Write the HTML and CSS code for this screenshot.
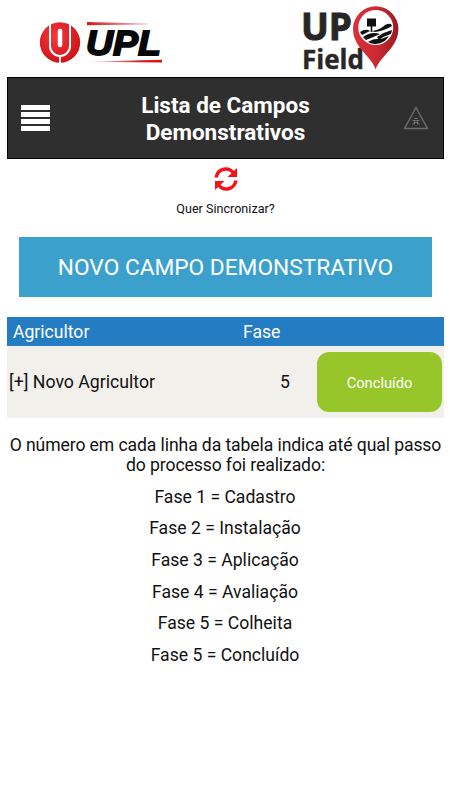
FILE: index.html
```html
<!DOCTYPE html>
<html lang="pt-BR">
<head>
<meta charset="utf-8">
<title>Lista de Campos Demonstrativos</title>
<link rel="stylesheet" href="styles.css">
</head>
<body>
<div class="brands">
  <svg class="logo-upl" width="130" height="77" viewBox="38 0 130 77" role="img" aria-label="UPL">
    <defs>
      <radialGradient id="disc" cx="40%" cy="35%" r="70%"><stop offset="0" stop-color="#f5383c"/><stop offset="1" stop-color="#cb1218"/></radialGradient>
      <linearGradient id="topbar"><stop offset="0" stop-color="#d8141c"/><stop offset="1" stop-color="#d8141c" stop-opacity=".25"/></linearGradient>
      <linearGradient id="lowbar"><stop offset="0" stop-color="#d8141c" stop-opacity=".1"/><stop offset=".7" stop-color="#d8141c"/></linearGradient>
    </defs>
    <circle cx="60" cy="42.500" r="20.200" fill="url(#disc)"/>
    <path d="M50 22v24a10 10 0 0 0 20 0V22" fill="none" stroke="#fff" stroke-width="2"/>
    <path d="M60 31v14" stroke="#fff" stroke-width="4.500" stroke-linecap="round"/>
    <path d="M60 56v8" stroke="#fff" stroke-width="1.800"/>
    <path d="M87 22l61 1.600v1l-61 .6z" fill="url(#topbar)"/>
    <path d="M87 61.800l75-2v2.800z" fill="url(#lowbar)"/>
    <text class="upl" x="86" y="54.500" textLength="75" lengthAdjust="spacingAndGlyphs">UPL</text>
  </svg>
  <svg class="logo-field" width="102" height="77" viewBox="300 0 102 77" role="img" aria-label="UP Field">
    <text class="up" x="301" y="39.800" textLength="51" lengthAdjust="spacingAndGlyphs">UP</text>
    <text class="field" x="302" y="68.500" textLength="62" lengthAdjust="spacingAndGlyphs">Field</text>
    <defs><linearGradient id="pin" x2="1"><stop offset="0" stop-color="#dc3038"/><stop offset=".5" stop-color="#cc2a32"/><stop offset="1" stop-color="#981c22"/></linearGradient></defs>
    <path d="M375.700 69.500c-4-13-22.700-22-22.700-40.500a22.700 22.700 0 0 1 45.400 0c0 18.500-18.700 27.500-22.700 40.500z" fill="url(#pin)"/>
    <circle cx="375.700" cy="27.500" r="17.500" fill="#fff"/>
    <g fill="#111">
      <path d="M367 18.500h9v8h-9zM370.700 26h1.600v6h-1.600z"/>
      <path d="M360 32q6-4 10-1l-8 4zM372 31q8-1 13-6 4-2 6-1l1 2q-8 5-17 6zM363 37q8-6 17-3l-9 4-5 2zM377 37q7-5 15-7l-1 4q-7 2-12 6zM368 42q6-4 13-3l8-3q-5 8-14 8-4 0-7-2z"/>
    </g>
  </svg>
</div>
<header class="bar">
  <div class="menu"><i></i><i></i><i></i><i></i></div>
  <h1>Lista de Campos<br>Demonstrativos</h1>
  <svg class="warn" width="26" height="24" viewBox="0 0 26 24"><path d="M13 1.500L24.500 22.500H1.500z"/><path class="bug" d="M11 12.500h4M9.500 14.500h7M9.500 18.500l1.500-2h4l1.500 2M11.500 14.500v4M14.500 14.500v4"/></svg>
</header>
<div class="sync">
  <svg width="24" height="26" viewBox="0 0 24 26"><path class="arc" d="M2 11.500C4 2 14.500 .5 19.500 7M22 14.500C20 24 9.500 25.500 4.500 19"/><path class="tip" d="M23 2v9h-9.500zM1 24v-9h9.500z"/></svg>
  <span>Quer Sincronizar?</span>
</div>
<a class="new">NOVO CAMPO DEMONSTRATIVO</a>
<div class="row head"><span>Agricultor</span><span>Fase</span></div>
<div class="row item"><span class="name">[+] Novo Agricultor</span><span class="phase">5</span><a class="done">Concluído</a></div>
<div class="notes">
  <p class="intro">O número em cada linha da tabela indica até qual passo<br>do processo foi realizado:</p>
  <p>Fase 1 = Cadastro</p>
  <p>Fase 2 = Instalação</p>
  <p>Fase 3 = Aplicação</p>
  <p>Fase 4 = Avaliação</p>
  <p>Fase 5 = Colheita</p>
  <p>Fase 5 = Concluído</p>
</div>
</body>
</html>
```

FILE: styles.css
```css
* { box-sizing: border-box; }
body { margin: 0; padding: 0 6px 0 7px; background: #fff; color: #111; font: 17.600px/20px Roboto, sans-serif; }
.brands { height: 77px; display: flex; justify-content: space-between; padding: 0 42px 0 31px; }
.upl { font: italic 700 35.500px "Liberation Sans", sans-serif; fill: #080808; stroke: #080808; stroke-width: 1.800px; }
.up { font: 700 37.500px "Open Sans", sans-serif; fill: #292627; stroke: #292627; stroke-width: 1px; }
.field { font: 700 26px "Open Sans", sans-serif; fill: #292627; stroke: #292627; stroke-width: .4px; }
.bar { height: 82px; background: #2f2f2f; border: 1px solid #000; display: grid; grid-template-columns: 56px 1fr 56px; align-items: center; }
.menu { width: 29px; margin-left: 13px; display: grid; gap: 2px; }
.menu i { height: 5px; background: #fff; }
.bar h1 { margin: 2px 0 0; font-size: 22.500px; line-height: 27px; font-weight: 700; color: #fff; text-align: center; }
.warn { justify-self: end; margin-right: 14px; fill: none; stroke: #6d6d6d; stroke-width: 1.500; stroke-linejoin: round; }
.bug { stroke-width: 1; }
.sync { height: 78px; padding-top: 7px; display: flex; flex-direction: column; align-items: center; font-size: 12.600px; line-height: 18px; }
.sync span { margin-top: 8px; }
.arc { fill: none; stroke: #f5121d; stroke-width: 3.500; }
.tip { fill: #f5121d; }
.new { display: block; height: 60px; margin: 0 12px 20px; background: #3ba1cc; color: #fff; font-size: 22.700px; line-height: 61px; text-align: center; }
.row { display: grid; align-items: center; }
.head { height: 29px; grid-template-columns: 230px 1fr; padding: 1px 0 0 6px; background: #247dc3; color: #fff; }
.item { height: 72px; grid-template-columns: 246px 62px 125px; padding-left: 2px; background: #f2f0eb; }
.name { font-size: 17.700px; }
.phase { padding-right: 2px; text-align: center; }
.done { height: 60px; border-radius: 12px; background: #97c62b; color: #fff; font-size: 14.700px; line-height: 62px; text-align: center; }
.notes { padding-top: 17px; text-align: center; }
.notes p { margin: 0 0 11.700px -1px; }
.notes .intro { margin: 0 -6px 11.700px; letter-spacing: -.1px; }
```
